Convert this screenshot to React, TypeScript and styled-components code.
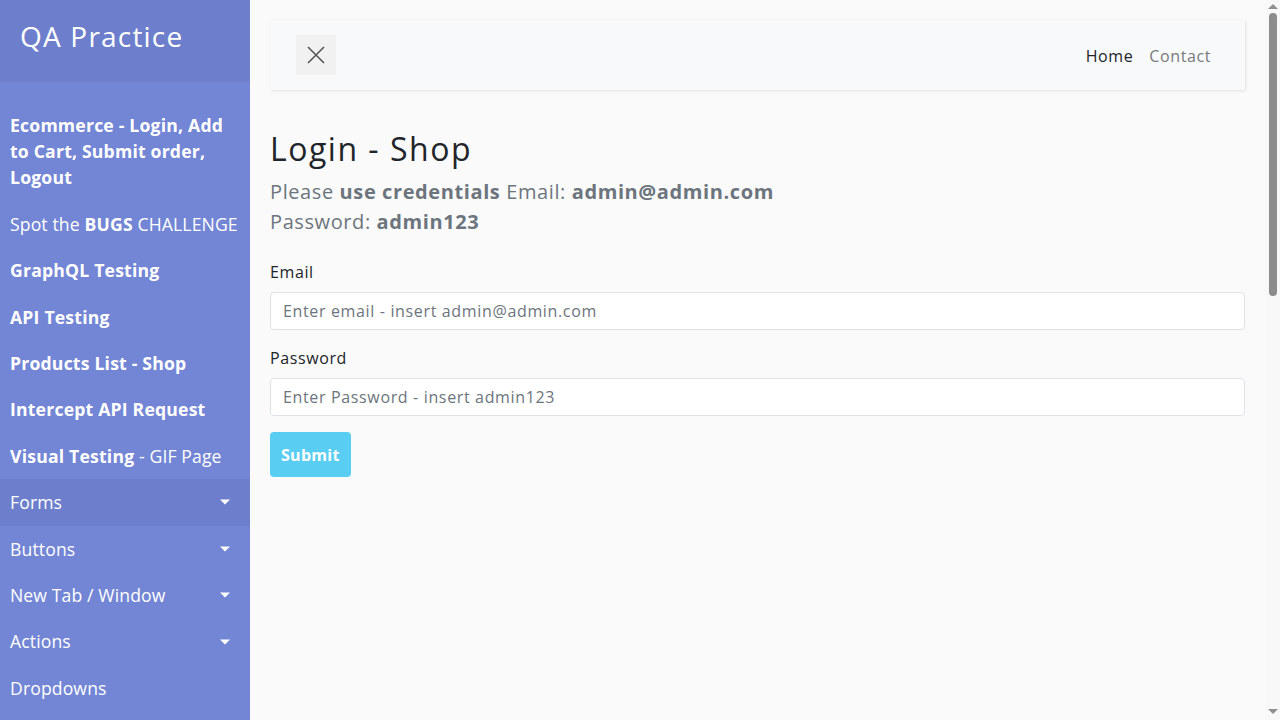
import React from "react";
import styled, { createGlobalStyle } from "styled-components";

const Global = createGlobalStyle`
  html, body { margin: 0; padding: 0; }
  body {
    font-family: "Open Sans", "Liberation Sans", sans-serif;
    background: #fafafa;
    color: #212529;
  }
  * { box-sizing: border-box; }
`;

const Wrapper = styled.div`
  display: flex;
  align-items: stretch;
  width: 100%;
  min-height: 100vh;
`;

const Sidebar = styled.nav`
  width: 250px;
  min-width: 250px;
  background: #7386d5;
  color: #fff;
`;

const SidebarHeader = styled.div`
  padding: 20px;
  background: #6d7fcc;
`;

const Brand = styled.h3`
  margin: 0 0 8px;
  font-size: 28px;
  line-height: 1.2;
  font-weight: 400;
  letter-spacing: 1.2px;
`;

const Menu = styled.ul`
  list-style: none;
  margin: 0;
  padding: 20px 0;
`;

const MenuItem = styled.li<{ $active?: boolean }>`
  background: ${(p) => (p.$active ? "#6d7fcc" : "transparent")};
`;

const MenuLink = styled.a<{ $caret?: boolean }>`
  position: relative;
  display: block;
  padding: 10px;
  font-size: 17.6px;
  line-height: 26.4px;
  color: #fff;
  text-decoration: none;
  letter-spacing: 0.12px;
  &::after {
    content: "";
    display: ${(p) => (p.$caret ? "block" : "none")};
    position: absolute;
    right: 20px;
    top: 50%;
    transform: translateY(-50%);
    border-top: 5px solid #fff;
    border-left: 5px solid transparent;
    border-right: 5px solid transparent;
  }
  b { font-weight: 700; letter-spacing: 0.2px; }
`;

const Content = styled.main`
  flex: 1;
  padding: 20px;
  min-width: 0;
  letter-spacing: 0.6px;
`;

const ScrollTrack = styled.div`
  position: sticky;
  top: 0;
  align-self: flex-start;
  width: 15px;
  min-width: 15px;
  height: 100vh;
  background: #f8f8f8;
  display: flex;
  flex-direction: column;
  align-items: center;
`;

const ScrollArrow = styled.div<{ $down?: boolean }>`
  width: 0;
  height: 0;
  border-left: 5px solid transparent;
  border-right: 5px solid transparent;
  ${(p) =>
    p.$down
      ? "border-top: 5px solid #8f8f8f; margin: auto 0 6px;"
      : "border-bottom: 5px solid #8f8f8f; margin: 4px 0 4px;"}
`;

const ScrollThumb = styled.div`
  width: 8px;
  height: 283px;
  border-radius: 4px;
  background: #8c8c8c;
`;

const TopBar = styled.div`
  display: flex;
  align-items: center;
  justify-content: space-between;
  height: 70px;
  padding: 0 34px 0 26px;
  background: #f8f9fa;
  box-shadow: 1px 1px 3px rgba(0, 0, 0, 0.1);
  margin-bottom: 40px;
`;

const ToggleButton = styled.button`
  width: 40px;
  height: 40px;
  border: none;
  background: #f1f1f1;
  display: flex;
  align-items: center;
  justify-content: center;
  padding: 0;
  border-radius: 0;
`;

const NavLinks = styled.div`
  display: flex;
  gap: 16px;
`;

const NavLink = styled.a<{ $active?: boolean }>`
  font-size: 16px;
  line-height: 24px;
  color: ${(p) => (p.$active ? "#212529" : "#7a7a7a")};
  text-decoration: none;
  padding-top: 1px;
`;

const Title = styled.h2`
  margin: 0 0 9px;
  font-size: 32px;
  line-height: 38px;
  font-weight: 500;
  letter-spacing: 1.5px;
  color: #212529;
`;

const Lead = styled.p`
  margin: 0 0 23px;
  font-size: 20px;
  line-height: 30px;
  color: #6c757d;
  font-weight: 400;
  b { font-weight: 700; }
`;

const FormGroup = styled.div`
  margin-bottom: 16px;
`;

const Label = styled.label`
  display: block;
  margin-bottom: 8px;
  font-size: 16px;
  line-height: 24px;
  color: #212529;
`;

const Input = styled.input`
  display: block;
  width: 100%;
  height: 38px;
  padding: 6px 12px;
  font-family: inherit;
  font-size: 16px;
  letter-spacing: 0.65px;
  border: 1px solid #dee2e6;
  border-radius: 4px;
  background: #fff;
  color: #495057;
  &::placeholder { color: #6c757d; opacity: 1; }
`;

const SubmitButton = styled.button`
  height: 45px;
  padding: 0 11px;
  font-family: inherit;
  font-size: 16px;
  font-weight: 700;
  letter-spacing: 0.3px;
  color: #fff;
  background: #5acdf2;
  border: none;
  border-radius: 4px;
`;

const CloseIcon = () => (
  <svg width="20" height="20" viewBox="0 0 20 20">
    <path d="M2 2 L18 18 M18 2 L2 18" stroke="#555" strokeWidth="1.6" fill="none" />
  </svg>
);

type Item = { label: React.ReactNode; caret?: boolean; active?: boolean };

const items: Item[] = [
  { label: <b>Ecommerce - Login, Add to Cart, Submit order, Logout</b> },
  { label: <>Spot the <b>BUGS</b> CHALLENGE</> },
  { label: <b>GraphQL Testing</b> },
  { label: <b>API Testing</b> },
  { label: <b>Products List - Shop</b> },
  { label: <b>Intercept API Request</b> },
  { label: <><b>Visual Testing</b> - GIF Page</> },
  { label: "Forms", caret: true, active: true },
  { label: "Buttons", caret: true },
  { label: "New Tab / Window", caret: true },
  { label: "Actions", caret: true },
  { label: "Dropdowns" },
];

export default function App() {
  return (
    <>
      <Global />
      <Wrapper>
        <Sidebar>
          <SidebarHeader>
            <Brand>QA Practice</Brand>
          </SidebarHeader>
          <Menu>
            {items.map((it, i) => (
              <MenuItem key={i} $active={it.active}>
                <MenuLink href="#" $caret={it.caret}>{it.label}</MenuLink>
              </MenuItem>
            ))}
          </Menu>
        </Sidebar>
        <Content>
          <TopBar>
            <ToggleButton aria-label="toggle">
              <CloseIcon />
            </ToggleButton>
            <NavLinks>
              <NavLink href="#" $active>Home</NavLink>
              <NavLink href="#">Contact</NavLink>
            </NavLinks>
          </TopBar>
          <Title>Login - Shop</Title>
          <Lead>
            Please <b>use credentials</b> Email: <b>admin@admin.com</b>
            <br />
            Password: <b>admin123</b>
          </Lead>
          <form onSubmit={(e) => e.preventDefault()}>
            <FormGroup>
              <Label htmlFor="email">Email</Label>
              <Input id="email" type="email" placeholder="Enter email - insert admin@admin.com" />
            </FormGroup>
            <FormGroup>
              <Label htmlFor="password">Password</Label>
              <Input id="password" type="password" placeholder="Enter Password - insert admin123" />
            </FormGroup>
            <SubmitButton type="submit">Submit</SubmitButton>
          </form>
        </Content>
        <ScrollTrack aria-hidden="true">
          <ScrollArrow />
          <ScrollThumb />
          <ScrollArrow $down />
        </ScrollTrack>
      </Wrapper>
    </>
  );
}
